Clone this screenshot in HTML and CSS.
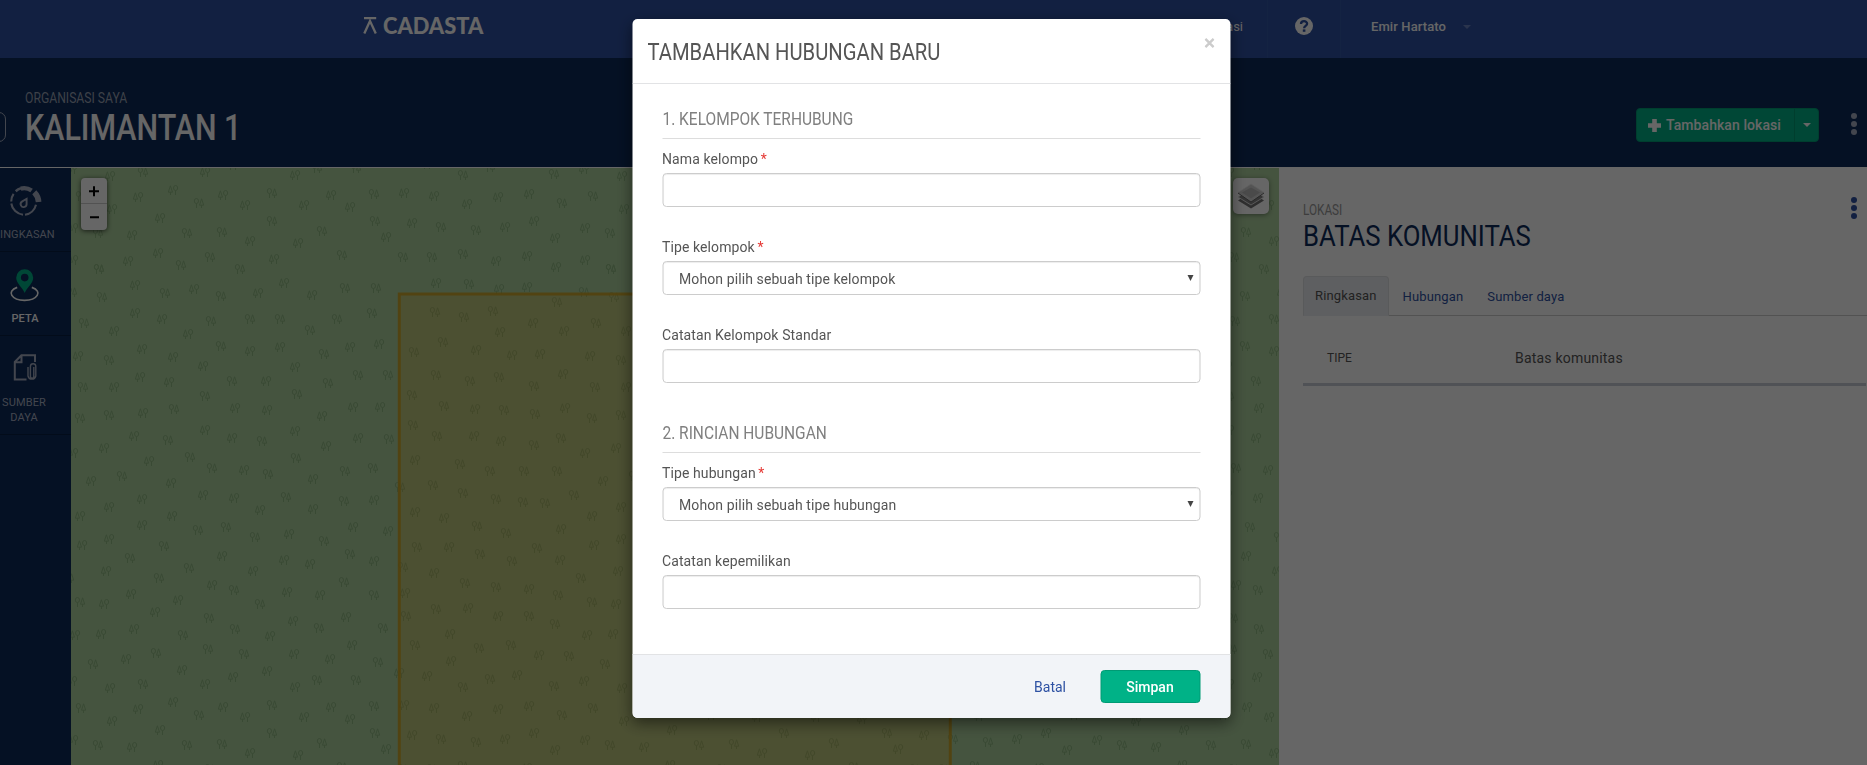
FILE: index.html
```html
<!DOCTYPE html>
<html lang="id">
<head>
<meta charset="utf-8">
<title>Kalimantan 1 – Cadasta</title>
<link rel="stylesheet" href="styles.css">
</head>
<body>
<div class="page">
  <header class="navbar">
    <div class="logo">
      <svg width="14" height="17" viewBox="0 0 14 17"><path d="M1 1.2H13.2M1.3 16.5 7 4 12.8 16.5" fill="none" stroke="#fff" stroke-width="2.3"/></svg>
      <span class="logo-text">CADASTA</span>
    </div>
    <nav class="nav-right">
      <span class="nav-item nav-org">Organisasi</span>
      <span class="nav-item nav-help"><svg width="18" height="18" viewBox="0 0 18 18"><circle cx="9" cy="9" r="9" fill="#fff"/><path d="M6 7.1C6 3.2 12.1 3.3 12.1 6.8 12.1 9 9.1 8.9 9.1 11.3" fill="none" stroke="#2e51a3" stroke-width="2.3"/><rect x="7.8" y="12.4" width="2.6" height="2.4" fill="#2e51a3"/></svg></span>
      <span class="nav-item nav-user"><span class="user-name">Emir Hartato</span><i class="caret caret-user"></i></span>
    </nav>
  </header>
  <div class="project-bar">
    <span class="project-logo"></span>
    <div class="project-name">
      <div class="org"><span class="org-text">ORGANISASI SAYA</span></div>
      <h1><span class="h1-text">KALIMANTAN 1</span></h1>
    </div>
    <div class="add-group">
      <span class="add-main"><svg width="13" height="13" viewBox="0 0 13 13"><path d="M6.5 0V13M0 6.5H13" stroke="#fff" stroke-width="4.6"/></svg><span class="add-text">Tambahkan lokasi</span></span>
      <span class="add-toggle"><i class="caret"></i></span>
    </div>
    <svg class="dots dots-light" width="6" height="22" viewBox="0 0 6 22"><circle cx="3" cy="3" r="3"/><circle cx="3" cy="11" r="3"/><circle cx="3" cy="19" r="3"/></svg>
  </div>
  <main class="content">
    <aside class="sidebar">
      <div class="side-item">
        <svg width="34" height="34" viewBox="0 0 34 34" fill="none" stroke="#a9b0c4"><path d="M3.2 17.5A13.2 13.2 0 0 1 5.6 9.8M3.3 19.5A13.2 13.2 0 0 0 15 30.7M17 30.8A13.2 13.2 0 0 0 28 20.8" stroke-width="2.1"/><path d="M7.7 7.2A13 13 0 0 1 13 4.3" stroke-width="2.5"/><path d="M12.8 4.6A13 13 0 0 1 23.6 6.6" stroke-width="4.3"/><path d="M26.3 8.3A15 15 0 0 1 30.6 18" stroke-width="5.6"/><path d="M18.6 14.8V19.7A3 3 0 1 1 13.9 17.6Z" stroke-width="1.9"/></svg>
        <span class="side-label">RINGKASAN</span>
      </div>
      <div class="side-item active">
        <svg width="34" height="34" viewBox="0 0 34 34"><path d="M9.2 19.4C-2.3 23.5 4 32.3 16.5 32.3S35.5 23.5 23.8 19.4" fill="none" stroke="#fff" stroke-width="1.7"/><path d="M16.7 25C14.5 19.5 8.2 15.5 8.2 9.8A8.5 8.5 0 0 1 25.2 9.8C25.2 15.5 18.9 19.5 16.7 25Z" fill="#00b287"/><circle cx="16.7" cy="9.6" r="3.8" fill="#0d2b5a"/></svg>
        <span class="side-label">PETA</span>
      </div>
      <div class="side-item tall">
        <svg width="34" height="34" viewBox="0 0 34 34" fill="none" stroke="#a9b0c4" stroke-width="2"><path d="M18.5 28.5H6.8V11L13.4 4.2H27V11M7 11.2H13.5V4.8"/><path d="M25.8 16V25.4A1.7 1.7 0 0 1 22.4 25.4V15.5A2.7 2.7 0 0 1 27.8 15.5V25A4 4 0 0 1 20 25V16" stroke-width="1.4"/></svg>
        <span class="side-label">SUMBER<br>DAYA</span>
      </div>
    </aside>
    <section class="map">
      <svg class="tiles" width="1208" height="597">
        <defs>
          <g id="round-left" fill="none" stroke="#8fb882" stroke-width="1"><ellipse cx="-2.6" cy="-2" rx="2.1" ry="2.5"/><path d="M-2.5 .5V5M2.6-4.2 .5 2.2H4.7ZM2.5 2.2V5"/></g>
          <g id="round-right"><use href="#round-left" transform="scale(-1 1)"/></g>
          <pattern id="wood" width="512" height="512" patternUnits="userSpaceOnUse"></pattern>
        </defs>
        <rect width="1208" height="597" fill="#add19e"/>
        <rect width="1208" height="597" fill="url(#wood)"/>
        <rect x="328.3" y="126" width="551" height="600" fill="#ffa000" fill-opacity=".2" stroke="#d0a21c" stroke-opacity=".85" stroke-width="3"/>
      </svg>
      <div class="zoom-control">
        <svg width="26" height="52" viewBox="0 0 26 52"><path d="M8 13.2H18M13 8.2V18.2M9 39.2H18" stroke="#000" stroke-width="2"/><path d="M0 25.5H26" stroke="#ccc"/></svg>
      </div>
      <div class="layers-control">
        <svg width="26" height="26" viewBox="0 0 26 26"><path d="M0 17.5 13 25.5 26 17.5 13 9Z" fill="#747474"/><path d="M0 14 13 22 26 14 13 5.500Z" fill="#858585" stroke="#e8e8e8" stroke-width=".9"/><path d="M0 9.500 13 18.500 26 9.500 13 1Z" fill="#d2d2d2" stroke="#eee" stroke-width=".8"/><path d="M4 9.500 13 4.500 22 9.500 13 15.500Z" fill="#b8b8b8"/><path d="M0 10 13 19 26 10" fill="none" stroke="#666"/></svg>
      </div>
    </section>
    <section class="detail">
      <div class="detail-head">
        <div>
          <div class="kind"><span class="kind-text">LOKASI</span></div>
          <h2><span class="h2-text">BATAS KOMUNITAS</span></h2>
        </div>
        <svg class="dots dots-blue" width="6" height="22" viewBox="0 0 6 22"><circle cx="3" cy="3" r="3"/><circle cx="3" cy="11" r="3"/><circle cx="3" cy="19" r="3"/></svg>
      </div>
      <div class="tabs">
        <span class="tab selected">Ringkasan</span><span class="tab">Hubungan</span><span class="tab">Sumber daya</span>
      </div>
      <div class="row"><span class="row-key">TIPE</span><span class="row-value">Batas komunitas</span></div>
    </section>
  </main>
</div>
<div class="backdrop">
  <div class="modal">
    <div class="modal-header"><h3><span class="h3-text">TAMBAHKAN HUBUNGAN BARU</span></h3><svg class="close" width="10" height="10" viewBox="0 0 10 10"><path d="M.9.9 9.100 9.100M9.100.9.9 9.100" stroke="#ccc" stroke-width="2.500"/></svg></div>
    <div class="modal-body">
      <h4><span class="h4-text">1. KELOMPOK TERHUBUNG</span></h4>
      <div class="field"><label>Nama kelompo <b>*</b></label><div class="control"></div></div>
      <div class="field"><label>Tipe kelompok <b>*</b></label><div class="control select"><span>Mohon pilih sebuah tipe kelompok</span><i></i></div></div>
      <div class="field"><label>Catatan Kelompok Standar</label><div class="control"></div></div>
      <h4 class="second"><span class="h4-text">2. RINCIAN HUBUNGAN</span></h4>
      <div class="field"><label>Tipe hubungan <b>*</b></label><div class="control select"><span>Mohon pilih sebuah tipe hubungan</span><i></i></div></div>
      <div class="field"><label>Catatan kepemilikan</label><div class="control"></div></div>
    </div>
    <div class="modal-footer"><span class="cancel">Batal</span><span class="save">Simpan</span></div>
  </div>
</div>
<script src="wood.js"></script>
</body>
</html>
```
FILE: wood.js
```js
// Tree pairs of the 512px woodland tile. Each group has a scale, an offset,
// and points marked r (round tree on the left) or c (conifer on the left).
const groups = [
  [3, -71, 3, -8, "c330,47 r429,37 c614,37 c413,110 c519,89 c669,104 r597,128 c336,146 c480,173 c396,224 r294,220 r561,219 r666,216 c474,278 r630,291 c384,302 r543,314 r297,326 r243,107"],
  [2.45, -71, 3, -168, "c600,616 c722,524 r666,578 c811,584 c744,614 c857,620 r917,581 r666,662 r919,662 r789,694 c612,722 c730,728 c945,712 c672,776 r837,766"],
  [3, -11, 3, 97, "r117,11 r540,11 c225,59 c402,71 c672,53 r315,83 r126,95 r483,93 c594,83 c756,89 r855,68 r948,68 c225,143 c306,161 r453,167 r570,161 r660,161 r831,161 r936,143 r72,173 c162,197 c384,206 r750,194 c246,251 c339,275 r483,242 c570,257 c660,245 c870,245 c957,236 r792,266 c54,272 r147,284 c429,302 c705,305 r894,329 r984,329 c240,335 c327,350 r516,347 c618,347 r804,353 r69,365 c162,365 r435,392 r711,386 c879,425 c960,425 r342,431 c525,428 c621,434 c249,443 r147,449 r60,458 c786,452 c435,494 c705,497 c222,512 c516,518 r606,527 r324,524 c894,518 r987,521 c132,548 c798,542"],
  [3, 0, 3, 287, "c234,17 r357,5 r675,10 r423,38 c519,44 r591,56 c726,71 r822,47 r906,38 r153,62 c60,77 c300,83 c396,119 c489,128 r645,125 c726,161 r819,137 c909,134 c213,131 c114,155 c27,182 c303,182 c567,164 c213,209 r465,215 r381,224 r552,245 c654,236 c846,215 c951,227 r759,257 c114,251 c33,269 r279,272 c453,302 r177,308 c639,314 c717,326 r837,296 c909,317 c105,347 r354,338 c546,347 r264,368 c423,389 r489,404 c648,410 c747,419 r819,380 r909,419 c180,416 c321,434 r27,440 c99,446 r567,446 c252,470 r414,488 c666,497 c825,485 r936,518 r744,518 r492,521 c189,521 c90,536 c12,539 r336,539 c597,542 c843,569 r411,581 r255,593 r519,596 c669,596 c777,611 c165,611 r66,626 r921,620 c333,644 c588,647 c486,665 r738,674 r855,674"],
  [3, 319, 3, -3, "r219,29 r492,26 c582,11 c42,83 c132,92 c324,95 c417,86 c231,116 r516,113 c66,173 r153,185 r258,194 c345,185 c432,167 c495,218 c585,188 r39,275 r126,275 r219,266 c318,287 c411,272 c498,305 c585,284 c138,353 r237,356 c327,371 c411,365 r582,380 r501,410 r135,440 r222,455 r309,437 c429,473 c330,500 c522,497 r159,530 r72,560 c258,554 c366,569 c450,566 r138,629 r240,647 r327,635 c519,626 r432,662 r66,689 r162,722 c255,731 r342,734 r435,746 c525,728 r69,779 r141,812 c252,812 c333,827 r432,839 r513,818 c585,863"],
  [3, 319, 3, 287, "c75,14 r210,26 r300,47 r402,47 r501,47 r30,95 r129,89 r219,113 r318,131 r399,140 r465,143 r552,119 c75,170 c162,188 r261,212 r348,233 c513,221 r81,275 c177,275 r270,296 r441,278 r366,317 c510,314 r39,335 c132,353 r573,368 r225,383 r318,395 c417,401 r504,419 c45,413 r48,482 r138,461 c234,458 c324,482 r417,482 r495,506 c180,536 r75,569 r267,578 r363,569 c447,599 r537,602 c183,617 c111,662 r300,671 c381,659 c27,653"]
];
const SIZE = 512, EDGE = 6;
const wood = document.getElementById("wood");
function tree(kind, x, y) {
  const use = document.createElementNS("http://www.w3.org/2000/svg", "use");
  use.setAttribute("href", kind === "r" ? "#round-left" : "#round-right");
  use.setAttribute("x", x);
  use.setAttribute("y", y);
  wood.appendChild(use);
}
for (const [sx, dx, sy, dy, points] of groups) {
  for (const p of points.split(" ")) {
    const [px, py] = p.slice(1).split(",").map(Number);
    const x = (Math.round(px / sx + dx) + SIZE) % SIZE;
    const y = (Math.round(py / sy + dy) + SIZE) % SIZE;
    const xs = x < EDGE ? [x, x + SIZE] : x > SIZE - EDGE ? [x, x - SIZE] : [x];
    const ys = y < EDGE ? [y, y + SIZE] : y > SIZE - EDGE ? [y, y - SIZE] : [y];
    xs.forEach(a => ys.forEach(b => tree(p[0], a, b)));
  }
}
```
FILE: styles.css
```css
* { box-sizing: border-box; }
body { margin: 0; width: 1867px; height: 765px; overflow: hidden; font: 14px/20px Roboto, "Liberation Sans", sans-serif; color: #555; }
h1, h2, h3, h4 { margin: 0; font-weight: 400; white-space: nowrap; }
svg { display: block; flex: none; }
.page { height: 765px; display: flex; flex-direction: column; background: #fff; }

/* Condensed headings */
.org-text, .h1-text, .kind-text, .h2-text, .h3-text, .h4-text, .logo-text { display: inline-block; transform-origin: 0 50%; white-space: nowrap; }

.navbar { height: 58px; flex: none; background: #2e51a3; display: flex; justify-content: space-between; padding-left: 363px; color: #fff; }
.logo { display: flex; gap: 6px; padding-top: 17px; }
.logo-text { font: 900 23px/17px Lato, sans-serif; transform: scaleX(.95); }
.nav-right { display: flex; width: 690px; }
.nav-item { display: flex; height: 58px; }
.nav-org { width: 91px; justify-content: flex-end; padding: 17px 24px 0 0; border-right: 1px solid #3457a6; font-size: 13px; }
.nav-help { width: 73px; padding: 17px 0 0 27px; border-right: 1px solid #3457a6; }
.nav-user { padding: 17px 0 0 30px; font-size: 13px; font-weight: 500; }
.user-name { letter-spacing: .1px; }
.caret { width: 0; height: 0; border: 4px solid transparent; border-top-color: #fff; border-bottom: 0; }
.caret-user { margin: 8px 0 0 17px; border-top-color: #6a83c0; }

.project-bar { height: 110px; flex: none; background: #0d2b5a; border-bottom: 1px solid #fff; display: flex; color: #fff; }
.project-logo { width: 26px; height: 30px; margin: 54px 0 0 -20px; border: 1px solid #a9b0c4; border-radius: 7px; }
.project-name { margin-left: 19px; padding-top: 30px; width: 1611px; }
.org { height: 20px; color: #9aa2b5; }
.org-text { transform: scaleX(.87); }
h1 { font-size: 36px; line-height: 38px; font-weight: 500; padding-top: 1px; }
.h1-text { transform: scaleX(.845); }
.add-group { display: flex; flex: none; width: 183px; height: 34px; margin-top: 50px; background: #00b287; border: 1px solid #009b74; border-radius: 4px; font-weight: 500; }
.add-main { display: flex; width: 157px; align-items: center; gap: 5px; padding-left: 11px; white-space: nowrap; }
.add-text { letter-spacing: .07px; }
.add-toggle { flex: 1; border-left: 1px solid #009b74; display: flex; align-items: center; justify-content: center; }
.dots-light { margin: 55px 0 0 32px; fill: #a9b0c4; }
.dots-blue { fill: #2e51a3; margin: 29px 10px 0 0; }

.content { flex: 1; display: flex; min-height: 0; }
.sidebar { flex: none; width: 92px; margin-left: -21px; background: #0d2b5a; color: #a9b0c4; }
.side-item { height: 84px; border-bottom: 1px solid #081f42; display: flex; flex-direction: column; align-items: center; padding-top: 16px; font-size: 11px; line-height: 15px; text-align: center; }
.side-label { margin-top: 9px; letter-spacing: .1px; }
.side-item:first-child .side-label { margin-left: -2px; }
.active { color: #fff; font-weight: 500; }
.tall { height: 99px; padding-top: 15px; }
.tall .side-label { margin-top: 10px; margin-left: -2px; }
.map { flex: none; width: 1208px; position: relative; overflow: hidden; }
.zoom-control { position: absolute; left: 10px; top: 10px; width: 26px; height: 52px; background: #fff; border-radius: 4px; box-shadow: 0 1px 5px rgba(0, 0, 0, .65); }
.layers-control { position: absolute; right: 10px; top: 10px; width: 36px; height: 36px; padding: 5px; background: #fff; border-radius: 5px; box-shadow: 0 1px 5px rgba(0, 0, 0, .4); }
.detail { flex: 1; padding-left: 24px; }
.detail-head { display: flex; justify-content: space-between; height: 108px; }
.kind { padding-top: 32px; height: 51px; color: #999; }
.kind-text { transform: scaleX(.84); }
h2 { font-size: 30px; line-height: 34px; color: #0d2b5a; }
.h2-text { transform: scaleX(.857); }
.tabs { display: flex; height: 40px; border-bottom: 1px solid #ccc; }
.tab { height: 40px; padding: 11px 12px 0; font-size: 13px; line-height: 20px; color: #2e51a3; letter-spacing: .14px; }
.selected { background: #eceef2; border: 1px solid #dfe0e3; border-bottom-color: #eceef2; border-radius: 4px 4px 0 0; color: #555; padding: 9px 11px 0; margin-right: 2px; }
.row { display: flex; margin-right: 1px; height: 70px; padding: 32px 0 0 24px; border-bottom: 3px solid #c9ccd6; }
.row-key { width: 188px; font-size: 12px; }
.row-value { letter-spacing: .2px; }

.backdrop { position: fixed; inset: 0; background: rgba(0, 0, 0, .6); padding-top: 19px; }
.modal { width: 598px; height: 699px; margin: 0 auto; transform: translateX(-2.5px); background: #fff; border-radius: 5px; box-shadow: 0 5px 15px rgba(0, 0, 0, .5); overflow: hidden; display: flex; flex-direction: column; }
.modal-header { height: 65px; border-bottom: 1px solid #e2e3e5; display: flex; justify-content: space-between; padding: 0 16px 0 15px; }
h3 { font-size: 24px; line-height: 32px; padding-top: 17px; color: #555; }
.h3-text { transform: scaleX(.842); }
.close { margin-top: 19px; }
.modal-body { padding: 25px 30px 0; height: 570px; }
h4 { font-size: 18px; line-height: 20px; height: 30px; border-bottom: 1px solid #ddd; margin-bottom: 10px; color: #808080; }
.h4-text { transform: scaleX(.86); }
.second { margin-top: 40px; }
.field { margin-bottom: 30px; height: 58px; }
label { display: block; height: 24px; letter-spacing: .1px; }
label b { color: #e53935; font-weight: 400; margin-left: -1px; }
.control { height: 34px; border: 1px solid #ccc; border-radius: 4px; box-shadow: inset 0 1px 1px rgba(0, 0, 0, .075); }
.select { display: flex; justify-content: space-between; padding: 7px 6px 0 16px; letter-spacing: .1px; }
.select i { width: 0; height: 0; margin-top: 6px; border: 3px solid transparent; border-top: 6px solid #444; border-bottom: 0; }
.modal-footer { flex: 1; border-top: 1px solid #e2e3e5; background: #f2f4f8; display: flex; justify-content: flex-end; padding: 15px 30px 0; }
.cancel { color: #2e51a3; padding: 7px 34px 0 0; }
.save { width: 100px; height: 33px; background: #00b287; border: 1px solid #009b74; border-radius: 4px; color: #fff; text-align: center; line-height: 32px; font-weight: 500; }
```
